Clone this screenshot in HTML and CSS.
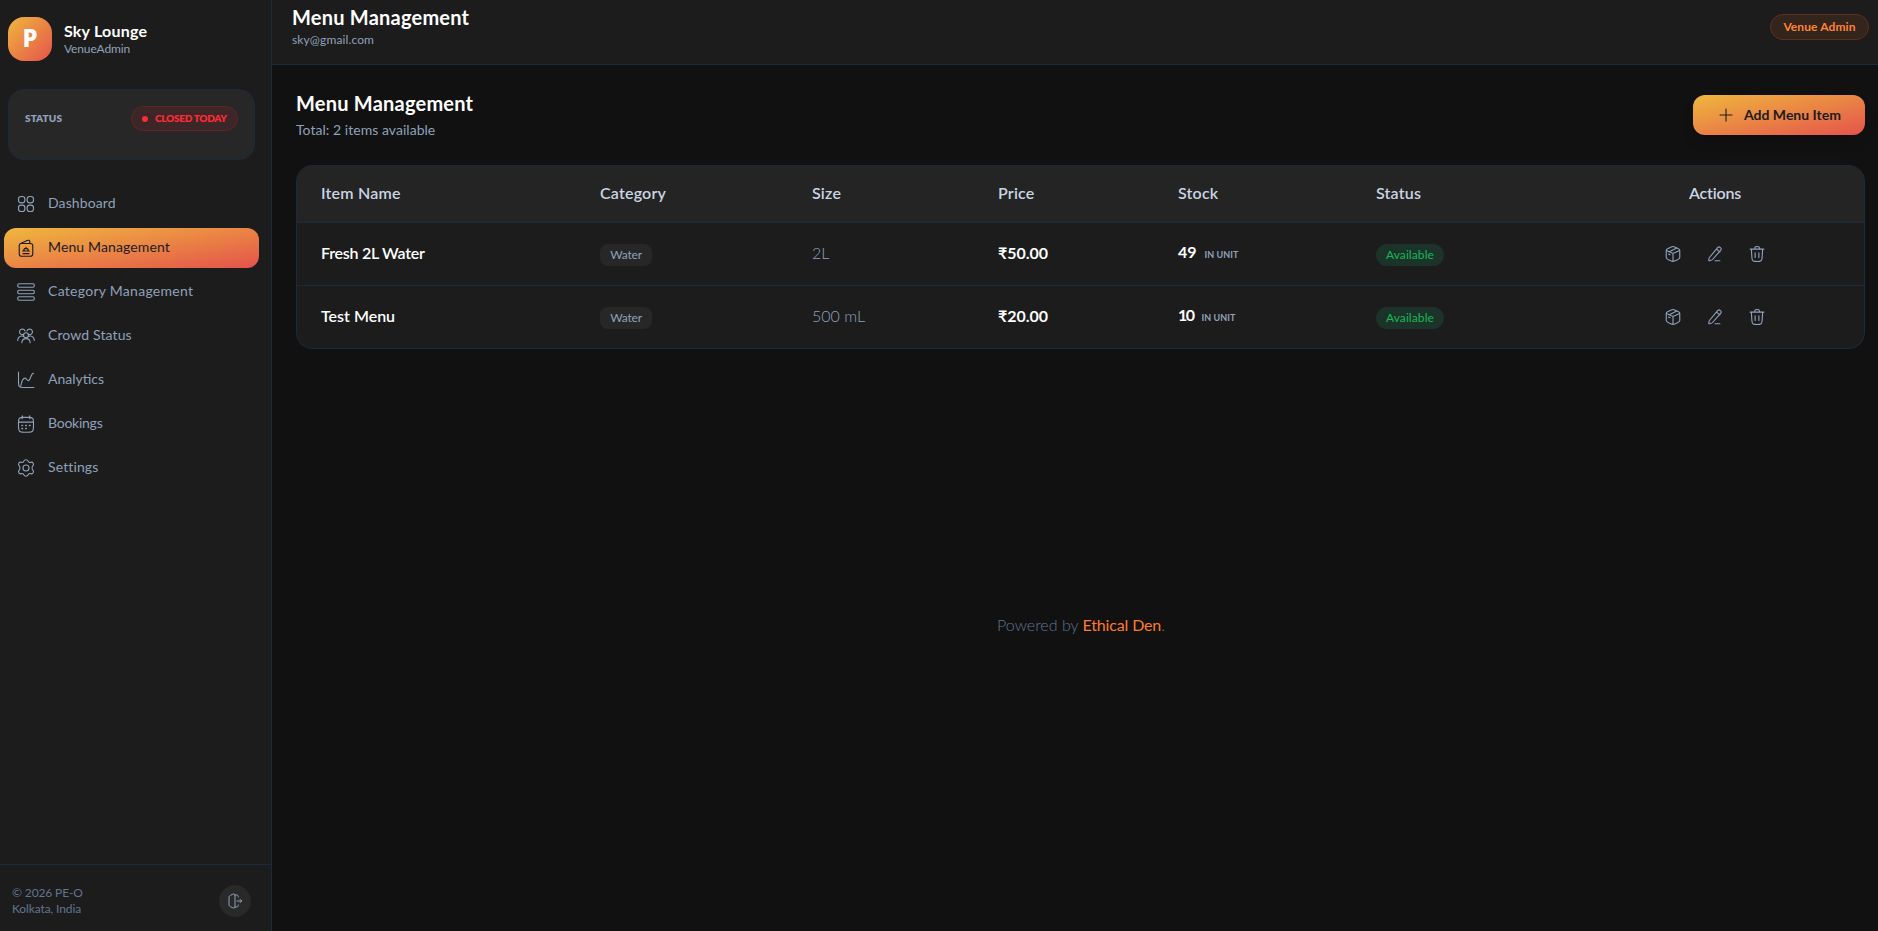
FILE: index.html
```html
<!DOCTYPE html>
<html lang="en">
<head>
<meta charset="utf-8">
<title>Menu Management</title>
<link rel="stylesheet" href="styles.css">
</head>
<body>
<svg width="0" height="0" class="defs">
  <symbol id="i-box" viewBox="0 0 24 24"><path d="M12 22c-.8 0-1.600-.3-3.100-1C5 19.200 3 18.200 3 16.600V7m9 15c.8 0 1.600-.3 3.100-1C19 19.200 21 18.200 21 16.600V7m-9 15V11.400M8.300 9.700 5.400 8.300C3.800 7.500 3 7.100 3 6.500s.8-1 2.400-1.800l2.900-1.400C10.100 2.400 11 2 12 2s1.900.4 3.700 1.300l2.900 1.400C20.200 5.500 21 5.900 21 6.500s-.8 1-2.400 1.800l-2.900 1.400c-1.800.9-2.700 1.300-3.700 1.300s-1.900-.4-3.700-1.300zM6 12l2 1m9-9L7 9"/></symbol>
  <symbol id="i-pen" viewBox="0 0 24 24"><path d="m5.100 16 9.900-11.800c1-1.100 1.500-1.700 2.100-1.700 1.200-.1 3.300 1.700 3.300 2.900 0 .6-.5 1.200-1.500 2.300L9 19c-.5.600-.9.900-1.500 1.100l-2.800.8c-.9.300-1.100 0-1-.9l.4-2.200c.2-.7.500-1.200 1-1.800zM14 5.500l4.500 3.700M12 21h6.500"/></symbol>
  <symbol id="i-trash" viewBox="0 0 24 24"><path d="m19.500 5.500-.6 10c-.2 2.600-.2 3.900-.9 4.800-.3.500-.7.800-1.200 1.100-1 .6-2.200.6-4.800.6s-3.900 0-4.800-.6c-.5-.3-.9-.7-1.200-1.100-.7-.9-.7-2.200-.9-4.800l-.6-10M3 5.500h18m-5 0-.7-1.400c-.4-.9-.7-1.400-1.100-1.700C13.700 2 13.100 2 12.100 2c-1.100 0-1.600 0-2.100.4-.4.300-.6.800-1 1.800l-.6 1.300M9.500 16.500v-6m5 6v-6"/></symbol>
</svg>
<div class="app">
  <aside class="sidebar">
    <div class="brand">
      <div class="logo">P</div>
      <div class="brand-text">
        <div class="brand-name">Sky Lounge</div>
        <div class="brand-role">VenueAdmin</div>
      </div>
    </div>
    <div class="status-card">
      <span class="status-label">STATUS</span>
      <span class="status-pill"><i class="dot"></i><span class="status-text">CLOSED TODAY</span></span>
    </div>
    <nav class="nav">
      <a class="nav-item"><svg class="icon" viewBox="0 0 24 24"><rect x="2" y="2" width="8.500" height="8.500" rx="3.400"/><rect x="13.500" y="2" width="8.500" height="8.500" rx="3.400"/><rect x="2" y="13.500" width="8.500" height="8.500" rx="3.400"/><rect x="13.500" y="13.500" width="8.500" height="8.500" rx="3.400"/></svg><span>Dashboard</span></a>
      <a class="nav-item active"><svg class="icon" viewBox="0 0 24 24"><path d="M6 6h12c2 0 3 1 3 3v11c0 2-1 3-3 3H6c-2 0-3-1-3-3V8.500C3 7 4 6.200 5.500 5.600l8-3.500c2-.8 3.500-.6 3.500 1V6M8 19.500h8M7.500 16h9M9 15.500a3 3 0 0 1 6 0M12 12v-.8"/></svg><span>Menu Management</span></a>
      <a class="nav-item wide"><svg class="icon" viewBox="0 0 24 24"><rect x="1" y="1" width="22" height="4.600" rx="1.600"/><rect x="1" y="9.700" width="22" height="4.600" rx="1.600"/><rect x="1" y="18.400" width="22" height="4.600" rx="1.600"/></svg><span>Category Management</span></a>
      <a class="nav-item"><svg class="icon" viewBox="0 0 24 24"><circle cx="12" cy="11" r="3.300"/><path d="M6.500 21c0-3.300 2.500-5.500 5.500-5.500s5.500 2.200 5.500 5.500M8.800 9.800a3.700 3.700 0 1 1 1.800-4.500M15.200 9.800a3.700 3.700 0 1 0-1.800-4.500M1 18c0-3.200 1.800-6 5.500-6 1 0 1.800.3 2.300.7M23 18c0-3.200-1.800-6-5.500-6-1 0-1.800.3-2.300.7"/></svg><span>Crowd Status</span></a>
      <a class="nav-item tighter"><svg class="icon" viewBox="0 0 24 24"><path d="M2 1.500V16c0 3 .5 4.500 1.500 5.200.8.800 2 .8 4.500.8h14.500M5 20C6 15 7.500 9.500 10.500 9.500c2.500 0 2.500 3.500 4.500 3.500 3.500 0 3-10 7-10"/></svg><span>Analytics</span></a>
      <a class="nav-item tight"><svg class="icon" viewBox="0 0 24 24"><path d="M17 1v4M7 1v4M2 9.500h20M9 3.200h6c3.500 0 5 .3 6 1.400s1 2.900 1 6.400v3c0 4 0 6-1.200 7.500S17.500 23 14 23h-4c-3.500 0-5.500 0-6.800-1.500S2 18 2 14v-3c0-3.500 0-5.300 1-6.400s2.500-1.400 6-1.400z"/><path d="M6.500 14h1m4 0h1m4 0h1M6.500 18h1m4 0h1" stroke-width="1.700"/></svg><span>Bookings</span></a>
      <a class="nav-item"><svg class="icon" viewBox="0 0 24 24"><circle cx="12" cy="12" r="4"/><path d="M12 1c2 0 2.600 1.100 3.200 2.300.6 1.200 1.600 1.700 2.900 1.200 1.300-.5 2.600-.5 3.500 1.200.9 1.600.5 2.600-.5 3.600-1.300 1.300-1.300 4.100 0 5.400 1 1 1.400 2 .5 3.600-.9 1.700-2.200 1.700-3.500 1.200-1.300-.5-2.300 0-2.900 1.200C14.600 21.900 14 23 12 23s-2.600-1.100-3.200-2.300c-.6-1.200-1.600-1.700-2.900-1.200-1.300.5-2.600.5-3.500-1.200-.9-1.600-.5-2.600.5-3.600 1.300-1.300 1.300-4.100 0-5.400-1-1-1.400-2-.5-3.600.9-1.700 2.200-1.700 3.500-1.200 1.300.5 2.300 0 2.900-1.200C9.400 2.100 10 1 12 1z"/></svg><span>Settings</span></a>
    </nav>
    <div class="side-foot">
      <div class="copyright">© 2026 PE-O<br>Kolkata, India</div>
      <div class="logout"><svg viewBox="0 0 24 24"><path d="M3 7c0-2 .6-2.800 2.200-3.500l3.600-1.700C11 .8 12 1.500 12 4v16c0 2.500-1 3.200-3.200 2.200l-3.600-1.700C3.600 19.800 3 19 3 17zM11.500 3H14c2 0 3 .8 3 3M11.500 21H14c2 0 3-.8 3-3M15 12h7m-2.500-2.500L22 12l-2.500 2.500"/></svg></div>
    </div>
  </aside>
  <div class="main">
    <header class="topbar">
      <div>
        <h1 class="title">Menu Management</h1>
        <div class="email">sky@gmail.com</div>
      </div>
      <span class="role-pill">Venue Admin</span>
    </header>
    <main class="content">
      <div class="toolbar">
        <div>
          <h2 class="title">Menu Management</h2>
          <div class="subtitle">Total: 2 items available</div>
        </div>
        <button class="add"><svg viewBox="0 0 16 16"><path d="M8 2v12M2 8h12"/></svg><span>Add Menu Item</span></button>
      </div>
      <div class="table">
        <div class="row head"><div>Item Name</div><div>Category</div><div>Size</div><div>Price</div><div>Stock</div><div>Status</div><div class="center">Actions</div></div>
        <div class="row">
          <div class="name long">Fresh 2L Water</div><div><span class="tag">Water</span></div><div class="size">2L</div><div class="price">₹50.00</div><div class="stock">49<small>IN UNIT</small></div><div><span class="avail">Available</span></div>
          <div class="actions"><svg><use href="#i-box"/></svg><svg><use href="#i-pen"/></svg><svg><use href="#i-trash"/></svg></div>
        </div>
        <div class="row">
          <div class="name">Test Menu</div><div><span class="tag">Water</span></div><div class="size">500 mL</div><div class="price">₹20.00</div><div class="stock ten">10<small>IN UNIT</small></div><div><span class="avail">Available</span></div>
          <div class="actions"><svg><use href="#i-box"/></svg><svg><use href="#i-pen"/></svg><svg><use href="#i-trash"/></svg></div>
        </div>
      </div>
      <footer class="powered">Powered by <span>Ethical Den</span>.</footer>
    </main>
  </div>
</div>
</body>
</html>
```
FILE: styles.css
```css
* { box-sizing: border-box; }
body { margin: 0; background: #111; color: #fff; font: 14px/20px Lato, "Noto Sans", sans-serif; }
.defs { display: block; position: absolute; }
svg { fill: none; stroke: currentColor; stroke-width: 1.5; stroke-linecap: round; stroke-linejoin: round; flex: none; }
.app { display: flex; height: 931px; overflow: hidden; }

.sidebar { width: 272px; flex: none; background: #1c1c1c; border-right: 1px solid #1d293d; display: flex; flex-direction: column; }
.brand { display: flex; gap: 12px; align-items: center; padding: 17px 8px 0; }
.logo { width: 44px; height: 44px; border-radius: 16px; background: linear-gradient(135deg, #efb73e, #e5534b); display: flex; align-items: center; justify-content: center; font: 800 24px/28px "Noto Sans", sans-serif; padding-bottom: 3px; }
.brand-text { padding-bottom: 1px; }
.brand-name { font-size: 16px; font-weight: 700; line-height: 20px; letter-spacing: .2px; }
.brand-role { font-size: 12px; line-height: 16px; letter-spacing: -.13px; color: #90a1b9; }
.status-card { margin: 28px 16px 0 8px; height: 71px; border: 1px solid #1d293d; border-radius: 16px; background: #272727; padding: 16px; display: flex; justify-content: space-between; align-items: flex-start; }
.status-label { font-size: 10px; font-weight: 800; line-height: 25px; letter-spacing: .1px; color: #90a1b9; }
.status-pill { display: flex; align-items: center; gap: 7px; width: 107px; height: 25px; padding-left: 10px; border: 1px solid #672227; border-radius: 13px; background: #3c2627; color: #fb2c36; font-size: 10px; font-weight: 800; letter-spacing: -.28px; white-space: nowrap; }
.status-text { padding-bottom: 1px; }
.dot { width: 6px; height: 6px; border-radius: 50%; background: #fb2c36; }
.nav { display: flex; flex-direction: column; gap: 4px; padding: 24px 12px 0 4px; }
.nav-item { height: 40px; border-radius: 12px; display: flex; align-items: center; gap: 13px; padding: 0 13px; color: #90a1b9; font-size: 14px; letter-spacing: .12px; }
.nav-item span { padding-bottom: 2px; }
.nav-item.wide { letter-spacing: .28px; }
.nav-item.tight { letter-spacing: -.25px; }
.nav-item.tighter { letter-spacing: 0; }
.nav-item.active { background: linear-gradient(to bottom right, #efb73e, #e5534b); color: #1c1c1c; }
.icon { width: 18px; height: 18px; }
.side-foot { margin-top: auto; height: 67px; border-top: 1px solid #1d293d; display: flex; align-items: flex-start; justify-content: space-between; padding: 20px 20px 0 12px; }
.copyright { font-size: 12px; line-height: 16px; letter-spacing: -.12px; color: #62748e; }
.logout { width: 32px; height: 32px; border-radius: 50%; background: #292929; color: #90a1b9; display: flex; align-items: center; justify-content: center; }
.logout svg { width: 16px; height: 16px; }

.main { flex: 1; min-width: 0; display: flex; flex-direction: column; }
.topbar { height: 65px; flex: none; background: #1c1c1c; border-bottom: 1px solid #1d293d; padding: 3px 9px 0 20px; display: flex; justify-content: space-between; align-items: flex-start; }
.title { margin: 0; font-size: 20px; font-weight: 700; line-height: 28px; letter-spacing: .22px; }
.email { margin-top: 1px; font-size: 12px; line-height: 16px; letter-spacing: .13px; color: #90a1b9; }
.role-pill { margin-top: 11px; width: 99px; height: 26px; border: 1px solid #5c301d; border-radius: 13px; background: #33241c; color: #ff8533; font-size: 12px; font-weight: 700; line-height: 24px; text-align: center; letter-spacing: .1px; }
.content { padding: 24px 12px 0 24px; }
.toolbar { display: flex; justify-content: space-between; align-items: flex-start; height: 76px; }
.subtitle { margin-top: 3px; font-size: 14px; line-height: 20px; letter-spacing: .04px; color: #90a1b9; }
.add { margin: 6px 1px 0 0; width: 172px; height: 40px; border: 0; border-radius: 12px; background: linear-gradient(to bottom right, #efb73e, #e5534b); color: #1c1c1c; font: 700 14px/20px Lato, sans-serif; display: flex; align-items: center; padding: 0 0 0 25px; gap: 10px; box-shadow: 0 8px 16px -6px rgba(0,0,0,.3); }
.add span { padding-bottom: 1px; }
.add svg { width: 16px; height: 16px; stroke-width: 1.1; }
.table { margin-right: 1px; margin-bottom: 1px; border: 1px solid #1d293d; border-radius: 16px; background: #1c1c1c; overflow: hidden; }
.row { display: grid; grid-template-columns: 279px 212px 186px 180px 198px 208px 1fr; height: 63px; border-bottom: 1px solid #1d293d; align-items: center; font-size: 16px; line-height: 24px; }
.row:last-child { height: 62px; border-bottom: 0; }
.row > div { padding: 0 24px 2px; white-space: nowrap; }
.row.head { height: 57px; background: #242424; color: #cad5e2; font-weight: 600; letter-spacing: .2px; }
.row .center { text-align: center; letter-spacing: -.2px; padding: 0 21px 2px 27px; }
.name { font-weight: 600; }
.name.long { letter-spacing: -.25px; }
.size { font-weight: 300; color: #90a1b9; }
.price { font-weight: 700; letter-spacing: -.05px; }
.stock { font-weight: 700; }
.stock.ten { letter-spacing: -1.5px; }
.stock small { margin-left: 8px; font-size: 9px; font-weight: 700; letter-spacing: .05px; color: #90a1b9; }
.tag, .avail { display: block; width: 52px; height: 22px; margin-top: 4px; border-radius: 8px; background: #272727; color: #90a1b9; font-size: 12px; line-height: 22px; text-align: center; letter-spacing: -.2px; }
.avail { width: 68px; border-radius: 11px; background: #1c3329; color: #16b857; letter-spacing: .1px; }
.row .actions { display: flex; justify-content: center; align-items: center; gap: 24px; padding: 0 21px 0 26px; color: #90a1b9; }
.actions svg { width: 18px; height: 18px; }
.powered { margin-top: 264px; text-align: center; font-size: 16px; line-height: 24px; font-weight: 300; color: #62748e; }
.powered span { color: #ff7a2b; font-weight: 400; letter-spacing: -.15px; }
```
